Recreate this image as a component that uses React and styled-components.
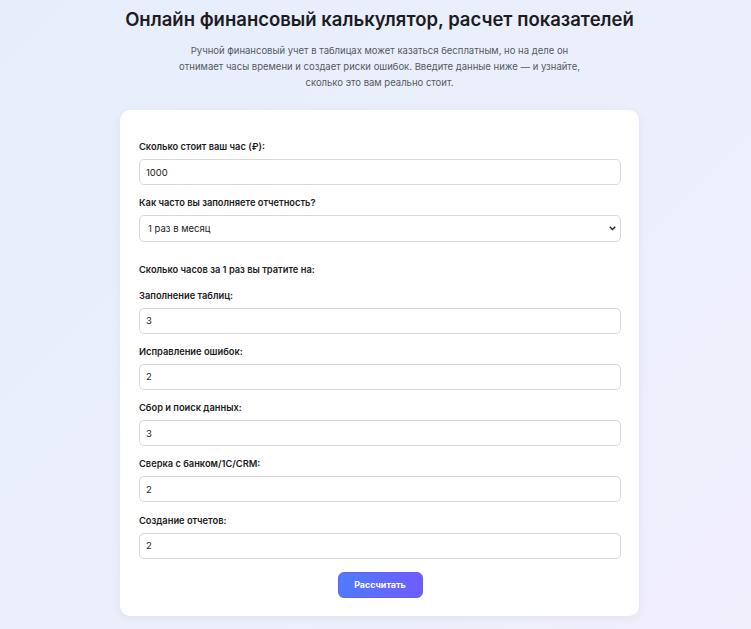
import React from 'react'
import styled, { createGlobalStyle } from 'styled-components'

const Global = createGlobalStyle`
  html, body {
    margin: 0;
    padding: 0;
  }
  body {
    font-family: Inter, 'Noto Sans', sans-serif;
    background: linear-gradient(135deg, #e6eefc 0%, #eceffb 60%, #f1eefc 100%);
    min-height: 100vh;
    color: #1f1f24;
  }
`

const Page = styled.div`
  display: flex;
  flex-direction: column;
  align-items: center;
  padding: 5px 0 13px 8px;
`

const Title = styled.h1`
  margin: 0;
  font-size: 18.5px;
  font-weight: 600;
  line-height: 28px;
  color: #1c1c22;
`

const Lead = styled.p`
  margin: 10px 0 19px;
  max-width: 412px;
  text-align: center;
  font-size: 9.5px;
  line-height: 16px;
  color: #555a63;
`

const Card = styled.div`
  width: 519px;
  box-sizing: border-box;
  background: #fff;
  border-radius: 10px;
  box-shadow: 0 2px 10px rgba(80, 90, 160, 0.08);
  padding: 30px 18px 18px 19px;
  display: flex;
  flex-direction: column;
`

const Field = styled.div`
  display: flex;
  flex-direction: column;
  gap: 5px;
  margin-bottom: 11.25px;
`

const Label = styled.label`
  font-size: 9.3px;
  font-weight: 600;
  line-height: 14px;
  color: #1c1c22;
`

const Section = styled.div`
  font-size: 9.3px;
  font-weight: 600;
  line-height: 14px;
  color: #1c1c22;
  margin: 9px 0 12px;
`

const Input = styled.input`
  height: 26px;
  box-sizing: border-box;
  border: 1px solid #d8d8dc;
  border-radius: 5px;
  padding: 0 6px;
  font-family: inherit;
  font-size: 9.5px;
  color: #1c1c22;
  background: #fff;
  outline: none;
`

const SelectBox = styled.div`
  position: relative;
  display: flex;
`

const Select = styled.select`
  flex: 1;
  appearance: none;
  height: 27px;
  box-sizing: border-box;
  border: 1px solid #d8d8dc;
  border-radius: 5px;
  padding: 0 8px;
  font-family: inherit;
  font-size: 9.5px;
  color: #1c1c22;
  background: #fff;
  outline: none;
`

const Chevron = styled.svg`
  position: absolute;
  right: 5px;
  top: 11px;
  width: 7px;
  height: 5px;
  pointer-events: none;
`

const Button = styled.button`
  align-self: center;
  margin-top: 2px;
  width: 85px;
  height: 26px;
  border: 1px solid #6a5cf0;
  border-radius: 6px;
  background: linear-gradient(90deg, #4f7bff 0%, #6f5cff 100%);
  color: #fff;
  font-family: inherit;
  font-size: 8.9px;
  font-weight: 700;
  cursor: pointer;
`

const hours = [
  ['Заполнение таблиц:', '3'],
  ['Исправление ошибок:', '2'],
  ['Сбор и поиск данных:', '3'],
  ['Сверка с банком/1С/CRM:', '2'],
  ['Создание отчетов:', '2'],
]

export default function App() {
  return (
    <>
      <Global />
      <Page>
        <Title>Онлайн финансовый калькулятор, расчет показателей</Title>
        <Lead>
          Ручной финансовый учет в таблицах может казаться бесплатным, но на деле он
          отнимает часы времени и создает риски ошибок. Введите данные ниже — и узнайте,
          сколько это вам реально стоит.
        </Lead>
        <Card>
          <Field>
            <Label>Сколько стоит ваш час (₽):</Label>
            <Input type="number" defaultValue="1000" />
          </Field>
          <Field>
            <Label>Как часто вы заполняете отчетность?</Label>
            <SelectBox>
              <Select defaultValue="month">
                <option value="month">1 раз в месяц</option>
                <option value="week">1 раз в неделю</option>
                <option value="day">Каждый день</option>
              </Select>
              <Chevron viewBox="0 0 7 5">
                <path d="M0.8 0.8 L3.5 3.6 L6.2 0.8" fill="none" stroke="#222" strokeWidth="1.4" />
              </Chevron>
            </SelectBox>
          </Field>
          <Section>Сколько часов за 1 раз вы тратите на:</Section>
          {hours.map(([label, value]) => (
            <Field key={label}>
              <Label>{label}</Label>
              <Input type="number" defaultValue={value} />
            </Field>
          ))}
          <Button>Рассчитать</Button>
        </Card>
      </Page>
    </>
  )
}
